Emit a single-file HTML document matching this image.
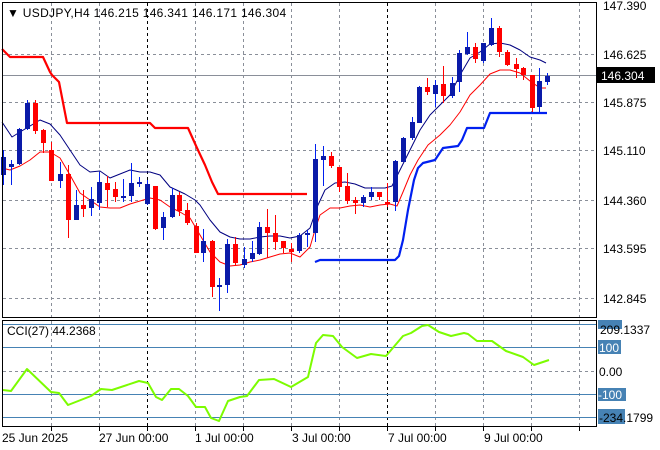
<!DOCTYPE html>
<html><head><meta charset="utf-8"><style>
html,body{margin:0;padding:0;background:#fff;width:660px;height:450px;overflow:hidden}
svg{display:block;font-family:"Liberation Sans",sans-serif}
</style></head><body>
<svg id="s" width="660" height="450" xmlns="http://www.w3.org/2000/svg">
<rect width="660" height="450" fill="#fff"/>
<g id="grid" shape-rendering="crispEdges"></g>
<g id="lines" fill="none"></g>
<g id="candles" shape-rendering="crispEdges"></g>
<g shape-rendering="crispEdges" fill="none" stroke="#000">
<rect x="2.5" y="2.5" width="594" height="315"/>
<rect x="2.5" y="320.5" width="594" height="106"/>
</g>
<text x="7" y="17" font-size="12" fill="#000" letter-spacing="0.3">▼ USDJPY,H4  146.215 146.341 146.171 146.304</text>
<text x="7" y="335" font-size="12" fill="#000">CCI(27) 44.2368</text>
<g font-size="12" fill="#000">
<text x="603" y="10">147.390</text>
<text x="603" y="59">146.625</text>
<text x="603" y="107">145.875</text>
<text x="603" y="155">145.110</text>
<text x="603" y="205">144.360</text>
<text x="603" y="253">143.595</text>
<text x="603" y="303">142.845</text>
</g>
<rect x="597" y="67" width="58" height="16" fill="#000"/>
<text x="601" y="80" font-size="12" fill="#fff">146.304</text>
<g font-size="12">
<rect x="598" y="320" width="24" height="9" fill="#4682b4"/>
<text x="600" y="334" fill="#000">209.1337</text>
<rect x="598" y="340" width="23" height="14" fill="#4682b4"/>
<text x="599" y="352" fill="#fff">100</text>
<text x="599" y="376" fill="#000">0.00</text>
<rect x="598" y="388" width="28" height="13" fill="#4682b4"/>
<text x="598" y="399" fill="#fff">-100</text>
<rect x="598" y="409" width="27" height="15" fill="#4682b4"/>
<text x="599" y="422" fill="#000">-234.1799</text>
</g>
<g font-size="12" fill="#000">
<text x="2" y="442">25 Jun 2025</text>
<text x="99" y="442">27 Jun 00:00</text>
<text x="195" y="442">1 Jul 00:00</text>
<text x="292" y="442">3 Jul 00:00</text>
<text x="388" y="442">7 Jul 00:00</text>
<text x="484" y="442">9 Jul 00:00</text>
</g>
</svg>
<script>
var NS="http://www.w3.org/2000/svg";
function el(p,t,a){var e=document.createElementNS(NS,t);for(var k in a)e.setAttribute(k,a[k]);p.appendChild(e);return e;}
var g=document.getElementById('grid');
[54,102,150,200,248,298].forEach(function(y){el(g,'line',{x1:3,x2:596,y1:y+.5,y2:y+.5,stroke:'#8a8f99','stroke-dasharray':'3,3'});});
for(var x=51;x<596;x+=48){var blk=(x==147||x==387);
 el(g,'line',{x1:x+.5,x2:x+.5,y1:3,y2:317,stroke:blk?'#000':'#8a8f99','stroke-dasharray':'3,3'});
 el(g,'line',{x1:x+.5,x2:x+.5,y1:321,y2:426,stroke:blk?'#000':'#8a8f99','stroke-dasharray':'3,3'});
 el(g,'line',{x1:x+.5,x2:x+.5,y1:427,y2:431,stroke:'#000'});}
el(g,'line',{x1:3,x2:596,y1:75.5,y2:75.5,stroke:'#8a8f99'});
[324,347,394,417].forEach(function(y){el(g,'line',{x1:3,x2:596,y1:y+.5,y2:y+.5,stroke:'#4682b4'});});
el(g,'line',{x1:3,x2:596,y1:371.5,y2:371.5,stroke:'#8a8f99','stroke-dasharray':'3,3'});
var L=document.getElementById('lines');
function pl(pts,c,w){el(L,'polyline',{points:pts,stroke:c,'stroke-width':w,'stroke-linejoin':'round'});}
pl("2,49 10,57 43,57 50,72 52,75 59,82 67,123 150,123 155,128 188,128 197,148 205,165 212,182 218,194 307,194","#f00",2.2);
pl("315,262 320,260 395,260 399,256 403,240 408,210 414,180 418,168 423,163 435,160 443,148 458,146 462,140 467,128 484,128 490,113 547,113","#0020f0",2.2);
pl("2,122 12,137 20,132 40,120 50,124 60,135 70,150 80,165 90,172 100,171 110,178 120,174 130,170 140,172 150,172 160,175 170,187 185,194 195,200 200,205 210,220 220,232 230,237 240,239 250,239 260,237 270,236 280,236 290,238 300,236 310,228 318,205 325,190 335,183 345,182 355,184 365,188 375,188 385,188 392,186 400,170 410,150 420,130 430,115 440,105 450,95 460,75 470,58 480,52 490,44 500,43 510,45 520,50 530,57 540,60 546,63","#000080",1);
pl("2,168 10,170 20,166 30,160 40,152 50,152 60,158 70,175 80,193 90,200 100,207 110,208 120,208 130,204 140,201 150,198 160,200 170,207 180,212 190,218 200,235 210,252 220,262 230,266 240,265 250,262 260,260 270,257 280,254 290,253 300,257 310,247 315,230 320,215 330,208 340,208 350,206 360,205 370,207 380,205 390,204 397,206 403,192 410,175 418,160 428,145 440,135 450,125 460,112 470,95 480,85 490,74 500,70 510,70 520,73 530,81 540,88 546,88","#f00",1);
pl("3,390 11,391 27,369 51,392 59,393 68,405 91,396 101,389 112,390 139,381 148,383 156,397 162,400 171,389 179,389 188,396 196,407 205,407 211,418 219,421 228,401 240,397 247,396 259,380 274,379 291,387 308,377 316,343 323,335 333,336 342,347 357,358 371,354 386,356 403,336 411,333 422,326 428,325 439,332 451,336 464,333 468,334 477,341 492,341 506,351 523,357 534,365 549,360","#7cfc00",2);
var C=[[3,'B',157,175,150,185],[11,'B',164,167,160,185],[19,'B',129,164,128,165],[27,'B',103,129,100,130],[35,'R',103,131,100,134],[43,'R',130,143,129,153],[51,'R',150,181,142,181],[60,'B',174,181,162,188],[68,'R',174,220,165,238],[76,'B',205,220,190,220],[83,'R',205,209,190,217],[91,'B',199,208,187,216],[99,'B',182,203,172,210],[107,'R',183,190,176,207],[115,'R',189,197,182,202],[123,'B',196,197,179,202],[131,'B',183,196,163,202],[139,'B',182,183,177,187],[147,'B',184,204,180,205],[155,'R',186,229,186,230],[163,'B',217,228,212,240],[172,'B',195,217,188,218],[179,'R',195,211,192,216],[187,'R',210,223,203,225],[196,'R',226,253,223,253],[203,'B',241,253,229,262],[212,'R',241,287,240,297],[219,'B',285,287,278,311],[227,'B',244,285,239,293],[235,'R',244,263,237,265],[244,'B',259,265,247,268],[252,'B',253,259,241,262],[259,'B',227,254,222,255],[267,'R',227,233,209,258],[275,'R',233,242,215,250],[283,'R',241,248,241,253],[291,'R',249,252,243,262],[299,'B',235,251,233,253],[307,'B',233,235,230,247],[315,'B',159,233,144,242],[323,'B',156,160,146,186],[331,'R',156,166,152,168],[339,'R',167,187,167,192],[347,'R',186,201,173,204],[355,'R',200,203,197,214],[363,'B',197,203,195,207],[371,'B',192,197,187,200],[379,'R',192,197,192,200],[387,'R',202,203,183,207],[395,'B',161,202,160,211],[403,'B',138,162,137,162],[412,'B',122,138,117,140],[419,'B',87,123,86,123],[427,'R',87,92,78,95],[435,'B',85,94,80,107],[443,'R',84,96,66,103],[452,'B',83,96,77,98],[459,'B',53,82,50,92],[467,'B',47,54,32,55],[475,'R',47,59,43,63],[483,'B',43,61,43,63],[491,'B',28,45,18,46],[499,'R',28,52,26,57],[507,'R',52,65,50,66],[516,'R',64,69,58,78],[523,'R',68,75,67,80],[532,'R',75,108,75,112],[539,'B',81,107,68,112],[547,'B',76,82,73,85]];
var CG=document.getElementById('candles');
C.forEach(function(c){var col=c[1]=='B'?'#0a1aa8':'#f00';
 el(CG,'rect',{x:c[0],y:c[4],width:1,height:c[5]-c[4],fill:c[1]=='B'?'#0020f0':'#f00'});
 el(CG,'rect',{x:c[0]-2,y:c[2],width:5,height:Math.max(2,c[3]-c[2]),fill:col});});
</script>
</body></html>
